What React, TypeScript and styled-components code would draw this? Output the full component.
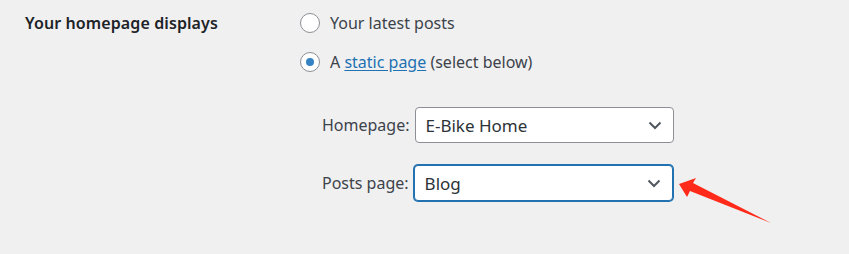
import styled, { createGlobalStyle } from "styled-components";

const Global = createGlobalStyle`
  html, body { margin: 0; background: #f0f0f1; }
  body { font-family: "Noto Sans", "Open Sans", sans-serif; color: #3c434a; }
`;

const Page = styled.div`
  position: relative;
  display: grid;
  grid-template-columns: 275px 1fr;
  padding: 13px 0 0 25px;
  height: 241px;
`;

const Heading = styled.div`
  font-size: 16px;
  font-weight: 600;
  color: #1d2327;
  line-height: 20px;
  letter-spacing: 0.1px;
`;

const Options = styled.div`
  display: flex;
  flex-direction: column;
`;

const Option = styled.label`
  display: flex;
  align-items: center;
  gap: 10px;
  height: 20px;
  font-size: 16px;
  margin-bottom: 19px;
  & a { color: #2271b1; text-decoration: underline; text-underline-offset: 2px; }
`;

const Radio = styled.span<{ $checked?: boolean }>`
  box-sizing: border-box;
  width: 20px;
  height: 20px;
  border-radius: 50%;
  border: 1px solid #8c8f94;
  background: #fff;
  display: flex;
  align-items: center;
  justify-content: center;
  &::after {
    content: "";
    display: ${(p) => (p.$checked ? "block" : "none")};
    width: 8px;
    height: 8px;
    border-radius: 50%;
    background: #3582c4;
  }
`;

const Pickers = styled.div`
  display: flex;
  flex-direction: column;
  gap: 22px;
  padding: 16px 0 0 22px;
`;

const PickerRow = styled.div`
  display: flex;
  align-items: center;
  gap: 5px;
  font-size: 16px;
`;

const Select = styled.div<{ $focused?: boolean }>`
  box-sizing: border-box;
  width: 259px;
  height: 36px;
  display: flex;
  align-items: center;
  justify-content: space-between;
  padding: 0 11px 0 10px;
  background: #fff;
  border: 1px solid ${(p) => (p.$focused ? "#2271b1" : "#8c8f94")};
  box-shadow: ${(p) => (p.$focused ? "0 0 0 1px #2271b1" : "none")};
  border-radius: 4px;
  color: #2c3338;
  font-size: 17px;
`;

const Arrow = styled.svg`
  position: absolute;
  left: 676px;
  top: 176px;
`;

function Chevron() {
  return (
    <svg width="14" height="9" viewBox="0 0 14 9">
      <polyline points="1.5,1.5 7,7 12.5,1.5" fill="none" stroke="#50575e" strokeWidth="2" />
    </svg>
  );
}

export default function App() {
  return (
    <>
      <Global />
      <Page>
        <Heading>Your homepage displays</Heading>
        <Options>
          <Option>
            <Radio />
            Your latest posts
          </Option>
          <Option>
            <Radio $checked />
            <span>
              A <a href="#">static page</a> (select below)
            </span>
          </Option>
          <Pickers>
            <PickerRow>
              Homepage:
              <Select>
                E-Bike Home
                <Chevron />
              </Select>
            </PickerRow>
            <PickerRow>
              Posts page:
              <Select $focused>
                Blog
                <Chevron />
              </Select>
            </PickerRow>
          </Pickers>
        </Options>
        <Arrow width="100" height="50" viewBox="0 0 100 50">
          <polygon points="3,8 20,2 17,7 95,47 14,15 11,21" fill="#ff2a1a" />
        </Arrow>
      </Page>
    </>
  );
}
